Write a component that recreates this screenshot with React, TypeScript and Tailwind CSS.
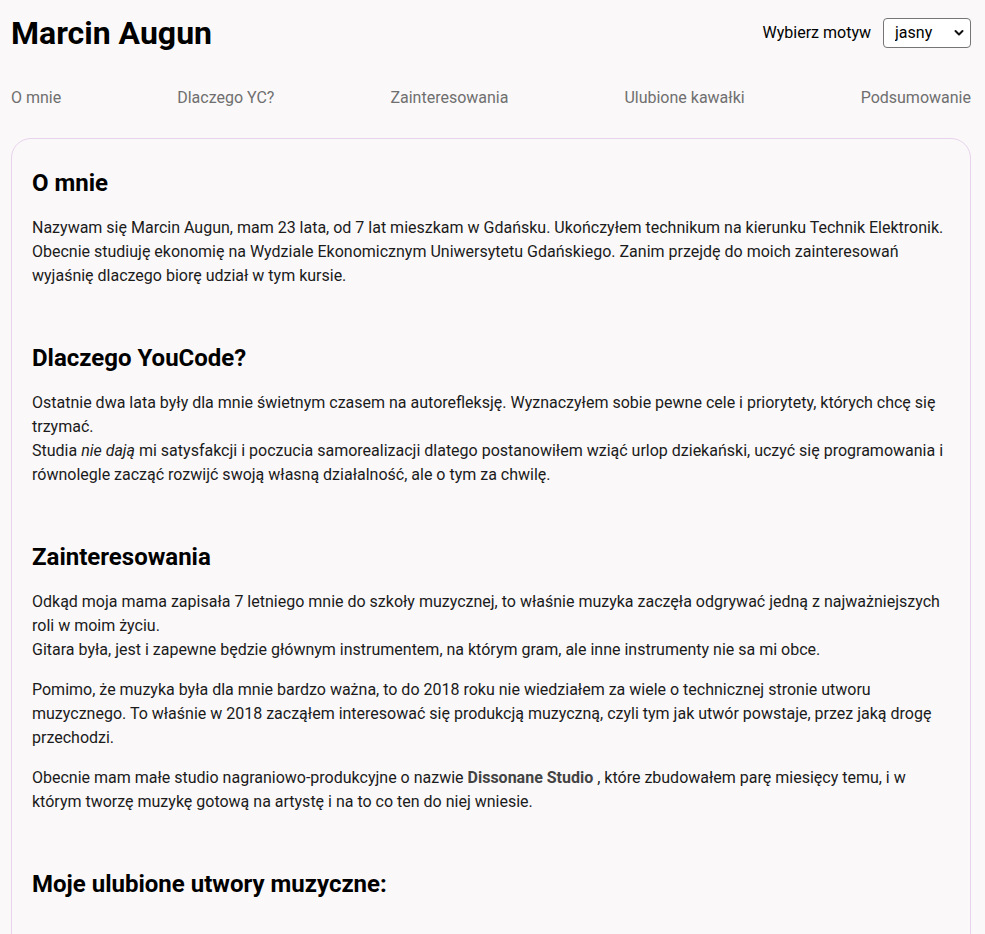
import { useState } from "react";

const navItems = [
  "O mnie",
  "Dlaczego YC?",
  "Zainteresowania",
  "Ulubione kawałki",
  "Podsumowanie",
];

function Section({
  title,
  children,
}: {
  title: string;
  children: React.ReactNode;
}) {
  return (
    <section className="mb-[56px] last:mb-0">
      <h2 className="text-[24px] leading-[28px] font-bold text-black mb-[19px]">
        {title}
      </h2>
      <div className="flex flex-col gap-[16px]">{children}</div>
    </section>
  );
}

export default function App() {
  const [theme, setTheme] = useState("jasny");

  return (
    <div
      className="min-h-screen bg-[#faf8f9] text-[#1b1b1b]"
      style={{ fontFamily: "Roboto, 'Liberation Sans', sans-serif" }}
    >
      <div className="ml-[11px] w-[960px] pb-10">
        <header className="flex items-center justify-between pt-[14px]">
          <h1 className="text-[32px] leading-[38px] font-bold text-black">
            Marcin Augun
          </h1>
          <div className="flex items-center gap-[12px]">
            <label htmlFor="theme" className="text-[16px] text-black">
              Wybierz motyw
            </label>
            <div className="relative">
              <select
                id="theme"
                value={theme}
                onChange={(e) => setTheme(e.target.value)}
                className="appearance-none w-[88px] h-[30px] pl-[11px] pr-6 text-[16px] text-black bg-white border border-[#767676] rounded-[4px]"
              >
                <option value="jasny">jasny</option>
                <option value="ciemny">ciemny</option>
              </select>
              <svg
                className="absolute right-[7px] top-[11px] pointer-events-none"
                width="10"
                height="8"
                viewBox="0 0 10 8"
              >
                <path
                  d="M1.5 2 L5 5.5 L8.5 2"
                  fill="none"
                  stroke="#111"
                  strokeWidth="2"
                  strokeLinecap="round"
                  strokeLinejoin="round"
                />
              </svg>
            </div>
          </div>
        </header>

        <nav className="mt-[34px] flex justify-between text-[16px] leading-[24px] text-[#6f6f6f]">
          {navItems.map((item) => (
            <a key={item} href="#" className="hover:text-black">
              {item}
            </a>
          ))}
        </nav>

        <main className="mt-[28px] border border-[#e8d3ec] rounded-[20px] px-[20px] pt-[30px] pb-[40px] text-[16px] leading-[24px]">
          <Section title="O mnie">
            <p>
              Nazywam się Marcin Augun, mam 23 lata, od 7 lat mieszkam w Gdańsku.
              Ukończyłem technikum na kierunku Technik Elektronik. Obecnie
              studiuję ekonomię na Wydziale Ekonomicznym Uniwersytetu
              Gdańskiego. Zanim przejdę do moich zainteresowań wyjaśnię dlaczego
              biorę udział w tym kursie.
            </p>
          </Section>

          <Section title="Dlaczego YouCode?">
            <p>
              Ostatnie dwa lata były dla mnie świetnym czasem na autorefleksję.
              Wyznaczyłem sobie pewne cele i priorytety, których chcę się
              trzymać.
              <br />
              Studia <em>nie dają</em> mi satysfakcji i poczucia samorealizacji
              dlatego postanowiłem wziąć urlop dziekański, uczyć się
              programowania i równolegle zacząć rozwijć swoją własną
              działalność, ale o tym za chwilę.
            </p>
          </Section>

          <Section title="Zainteresowania">
            <p>
              Odkąd moja mama zapisała 7 letniego mnie do szkoły muzycznej, to
              właśnie muzyka zaczęła odgrywać jedną z najważniejszych roli w
              moim życiu.
              <br />
              Gitara była, jest i zapewne będzie głównym instrumentem, na którym
              gram, ale inne instrumenty nie sa mi obce.
            </p>
            <p>
              Pomimo, że muzyka była dla mnie bardzo ważna, to do 2018 roku nie
              wiedziałem za wiele o technicznej stronie utworu muzycznego. To
              właśnie w 2018 zacząłem interesować się produkcją muzyczną, czyli
              tym jak utwór powstaje, przez jaką drogę przechodzi.
            </p>
            <p>
              Obecnie mam małe studio nagraniowo-produkcyjne o nazwie{" "}
              <strong className="font-bold text-[#444]">Dissonane Studio</strong>{" "}
              , które zbudowałem parę miesięcy temu, i w którym tworzę muzykę
              gotową na artystę i na to co ten do niej wniesie.
            </p>
          </Section>

          <Section title="Moje ulubione utwory muzyczne:">
            <p className="h-[120px]"></p>
          </Section>
        </main>
      </div>
    </div>
  );
}
